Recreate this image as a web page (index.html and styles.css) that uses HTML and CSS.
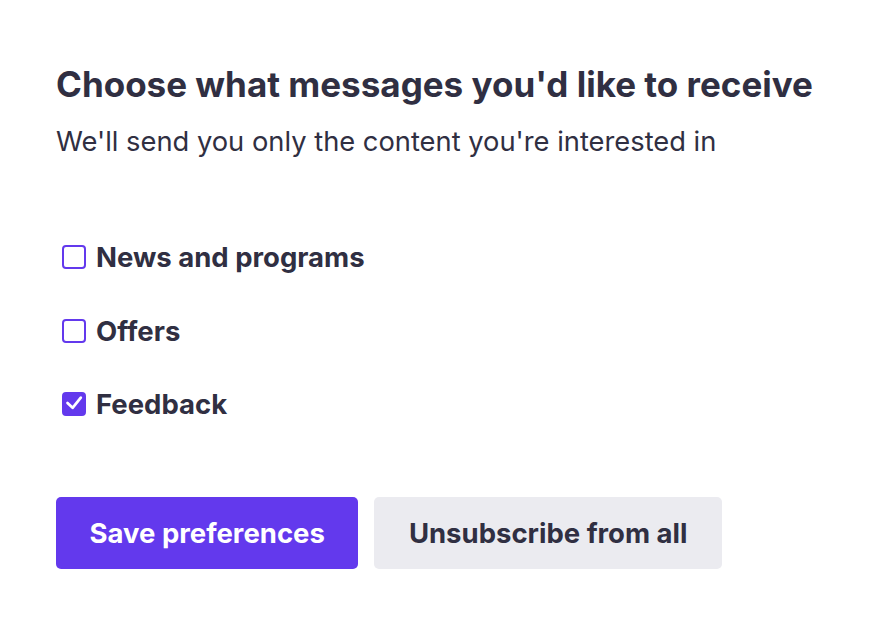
FILE: index.html
```html
<!DOCTYPE html>
<html>
<head>
<meta charset="utf-8">
<link rel="stylesheet" href="styles.css">
</head>
<body>
<main class="page">
  <h1 class="title">Choose what messages you'd like to receive</h1>
  <p class="subtitle">We'll send you only the content you're interested in</p>
  <div class="options">
    <label class="option"><span class="box"></span><span class="label">News and programs</span></label>
    <label class="option"><span class="box"></span><span class="label">Offers</span></label>
    <label class="option"><span class="box checked"><svg viewBox="0 0 24 24" width="24" height="24"><path d="M5.5 11 L10.6 15.8 L18.8 5.6" fill="none" stroke="#fff" stroke-width="2.7" stroke-linecap="round" stroke-linejoin="round"/></svg></span><span class="label">Feedback</span></label>
  </div>
  <div class="actions">
    <button class="btn primary">Save preferences</button>
    <button class="btn secondary">Unsubscribe from all</button>
  </div>
</main>
</body>
</html>
```
FILE: styles.css
```css
* { box-sizing: border-box; }
html, body { margin: 0; background: #fff; }
body { font-family: Inter, "Noto Sans", sans-serif; color: #302f42; }
.page { padding: 62px 56px 0 56px; }
.title { margin: 0; font-size: 35px; font-weight: 700; line-height: 44px; }
.subtitle { margin: 18px 0 0 0; font-size: 27.3px; font-weight: 400; line-height: 36px; }
.options { margin-top: 80px; display: flex; flex-direction: column; gap: 39.5px; padding-left: 6px; }
.option { display: flex; align-items: center; gap: 10px; height: 34px; }
.box { width: 24px; height: 24px; border: 2px solid #6339ed; border-radius: 4px; display: flex; align-items: center; justify-content: center; flex: none; }
.box.checked { background: #6339ed; }
.box.checked svg { flex: none; margin: -2px; }
.label { font-size: 27.5px; font-weight: 700; }
.actions { margin-top: 76px; display: flex; gap: 16px; }
.btn { border: 0; height: 72px; border-radius: 5px; font-family: Inter, "Noto Sans", sans-serif; font-size: 27.5px; font-weight: 700; padding: 0 33.5px; }
.btn.primary { background: #6339ed; color: #fff; }
.btn.secondary { background: #ebebf0; color: #302f42; padding: 0 34.5px; }
```
